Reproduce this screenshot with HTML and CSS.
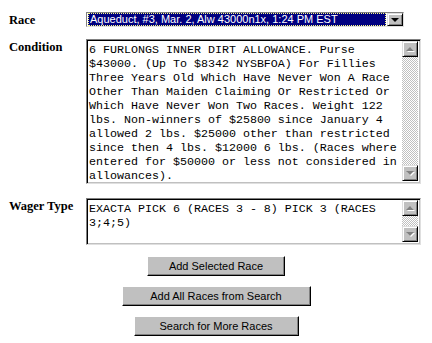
FILE: index.html
```html
<!DOCTYPE html>
<html lang="en">
<head>
    <meta charset="UTF-8">
    <meta name="viewport" content="width=device-width, initial-scale=1.0">
    <title>Add Race</title>
    <link rel="stylesheet" href="styles.css">
</head>
<body>
    <form class="race-form">
        <div class="row row-race">
            <label class="label">Race</label>
            <div class="combo">
                <span class="combo-value">Aqueduct, #3, Mar. 2, Alw 43000n1x, 1:24 PM EST</span>
                <span class="combo-btn"><span class="arrow-down dark"></span></span>
            </div>
        </div>

        <div class="row row-condition">
            <label class="label">Condition</label>
            <div class="memo memo-tall">
                <div class="memo-text">6 FURLONGS INNER DIRT ALLOWANCE. Purse $43000. (Up To $8342 NYSBFOA) For Fillies Three Years Old Which Have Never Won A Race Other Than Maiden Claiming Or Restricted Or Which Have Never Won Two Races. Weight 122 lbs. Non-winners of $25800 since January 4 allowed 2 lbs. $25000 other than restricted since then 4 lbs. $12000 6 lbs. (Races where entered for $50000 or less not considered in allowances).</div>
                <div class="scrollbar">
                    <span class="sb-btn"><span class="arrow-up"></span></span>
                    <span class="sb-track"></span>
                    <span class="sb-btn"><span class="arrow-down"></span></span>
                </div>
            </div>
        </div>

        <div class="row row-wager">
            <label class="label">Wager Type</label>
            <div class="memo memo-short">
                <div class="memo-text">EXACTA PICK 6 (RACES 3 - 8) PICK 3 (RACES 3;4;5)</div>
                <div class="scrollbar">
                    <span class="sb-btn"><span class="arrow-up"></span></span>
                    <span class="sb-track"></span>
                    <span class="sb-btn"><span class="arrow-down"></span></span>
                </div>
            </div>
        </div>

        <div class="buttons">
            <button type="button" class="btn btn-selected">Add Selected Race</button>
            <button type="button" class="btn btn-all">Add All Races from Search</button>
            <button type="button" class="btn btn-search">Search for More Races</button>
        </div>
    </form>
</body>
</html>
```

FILE: styles.css
```css
body {
    margin: 0;
    background-color: #fff;
    font-family: "Liberation Sans", Arial, sans-serif;
    color: #000;
}

.race-form {
    padding-top: 12px;
}

.row {
    display: flex;
    align-items: flex-start;
}

.row-race {
    margin-bottom: 12px;
}

.row-condition {
    margin-bottom: 14px;
}

.row-wager {
    margin-bottom: 11px;
}

.label {
    width: 86px;
    padding-left: 9px;
    padding-top: 1px;
    box-sizing: border-box;
    font-family: "Liberation Serif", "Times New Roman", serif;
    font-weight: bold;
    font-size: 12.5px;
    line-height: 14px;
}

/* combo box */
.combo {
    width: 318px;
    height: 15px;
    box-sizing: border-box;
    display: flex;
    border: 1px solid;
    border-color: #808080 #dfdfdf #dfdfdf #808080;
    background-color: #fff;
}

.combo-value {
    flex: 1;
    margin: 0 1px;
    background-color: #000080;
    color: #fff;
    border: 1px dotted #ffff80;
    font-size: 11px;
    line-height: 11px;
    padding-left: 1px;
    white-space: nowrap;
    overflow: hidden;
}

.combo-btn {
    width: 16px;
    height: 13px;
    box-sizing: border-box;
    background-color: #c0c0c0;
    border: 1px solid;
    border-color: #dfdfdf #000 #000 #dfdfdf;
    box-shadow: inset 1px 1px #fff, inset -1px -1px #808080;
    display: flex;
    align-items: center;
    justify-content: center;
}

/* text boxes */
.memo {
    width: 335px;
    display: flex;
    box-sizing: border-box;
    border: 1px solid;
    border-color: #808080 #dfdfdf #dfdfdf #808080;
    box-shadow: inset 1px 1px #000, inset -1px -1px #c0c0c0;
    padding: 1px;
    background-color: #fff;
}

.memo-tall {
    height: 145px;
}

.memo-short {
    height: 47px;
}

.memo-text {
    flex: 1;
    padding: 2px 0 0 1px;
    font-family: "Liberation Mono", "Courier New", monospace;
    font-size: 11.67px;
    line-height: 14px;
    overflow: hidden;
}

.scrollbar {
    width: 16px;
    display: flex;
    flex-direction: column;
    margin: 0 1px 1px 0;
}

.sb-btn {
    width: 16px;
    height: 16px;
    box-sizing: border-box;
    background-color: #c0c0c0;
    border: 1px solid;
    border-color: #dfdfdf #000 #000 #dfdfdf;
    box-shadow: inset 1px 1px #fff, inset -1px -1px #808080;
    display: flex;
    align-items: center;
    justify-content: center;
}

.sb-track {
    flex: 1;
    background: repeating-conic-gradient(#c0c0c0 0 25%, #fff 0 50%) 0 0 / 2px 2px;
}

.arrow-up,
.arrow-down {
    width: 0;
    height: 0;
    border-left: 4px solid transparent;
    border-right: 4px solid transparent;
}

.arrow-up {
    border-bottom: 4px solid #808080;
    filter: drop-shadow(1px 1px 0 #fff);
}

.arrow-down {
    border-top: 4px solid #808080;
    filter: drop-shadow(1px 1px 0 #fff);
}

.arrow-down.dark {
    border-top-color: #000;
    filter: none;
}

/* buttons */
.buttons {
    display: flex;
    flex-direction: column;
    align-items: center;
    gap: 10px;
}

.btn {
    height: 20px;
    padding: 0;
    background-color: #c0c0c0;
    border: 1px solid;
    border-color: #fff #000 #000 #fff;
    box-shadow: inset -1px -1px #808080;
    font-family: "Liberation Sans", Arial, sans-serif;
    font-size: 11px;
    color: #000;
}

.btn-selected {
    width: 138px;
}

.btn-all {
    width: 189px;
}

.btn-search {
    width: 165px;
}
```
